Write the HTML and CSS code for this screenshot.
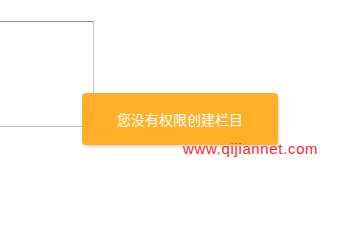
FILE: index.html
```html
<!DOCTYPE html>
<html lang="zh">
<head>
	<meta charset="UTF-8">
	<meta name="viewport" content="width=device-width, initial-scale=1.0">
	<title>栏目</title>
	<link rel="stylesheet" href="styles.css">
</head>
<body>
	<div class="form">
		<textarea class="content"></textarea>
	</div>

	<!-- 提示框 -->
	<div class="toast">您没有权限创建栏目</div>
	<span class="mark">www.qijiannet.com</span>
</body>
</html>
```

FILE: styles.css
```css
body{
	margin: 0;
	background: #fff;
	font-family: "Liberation Sans", "Noto Sans CJK SC", sans-serif;
}
.form{
	padding-top: 21px;
	margin-left: -120px;
}
.content{
	display: block;
	box-sizing: border-box;
	width: 214px;
	height: 106px;
	margin: 0;
	border: 1px solid #c4c4c4;
	border-top-color: #8c8c8c;
	background: #fff;
	outline: none;
}
/* 提示框 */
.toast{
	position: absolute;
	left: 82px;
	top: 93px;
	width: 196px;
	height: 52px;
	line-height: 52px;
	text-align: center;
	color: #fff;
	font-size: 14px;
	font-family: "Noto Sans CJK SC", sans-serif;
	background: #ffa812;
	opacity: .9;
	border-radius: 4px;
	box-shadow: 1px 2px 3px rgba(0,0,0,.18);
}
.mark{
	position: absolute;
	left: 183px;
	top: 140px;
	color: #ff1f33;
	font-size: 15px;
	line-height: 18px;
	letter-spacing: .65px;
}
```
